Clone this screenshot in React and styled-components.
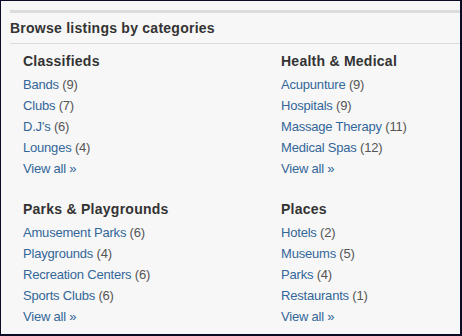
import styled, { createGlobalStyle } from "styled-components"

const Global = createGlobalStyle`
html, body {
  margin: 0;
  padding: 0;
  background: #f7f7f7;
}
`;

const Frame = styled.div`
box-sizing: border-box;
width: 462px;
height: 336px;
border: 1px solid #0b0b24;
border-right-width: 2px;
border-bottom-width: 2px;
background: #f7f7f7;
padding: 9px 0 0 9px;
font-family: "Liberation Sans", Arial, sans-serif;
overflow: hidden;
`;

const Panel = styled.div`
border-top: 3px solid #dcdcdc;
`;

const Header = styled.div`
height: 30px;
line-height: 30px;
border-bottom: 1px solid #dcdcdc;
font-size: 14px;
font-weight: bold;
color: #333;
letter-spacing: 0.25px;
`;

const Grid = styled.div`
display: grid;
grid-template-columns: 258px 1fr;
row-gap: 20px;
padding: 7px 0 0 13px;
`;

const Group = styled.div`
display: flex;
flex-direction: column;
`;

const GroupTitle = styled.div`
font-size: 14px;
font-weight: bold;
line-height: 20px;
color: #333;
letter-spacing: 0.25px;
margin-bottom: 3px;
`;

const Item = styled.div`
font-size: 13px;
line-height: 21px;
color: #555;
letter-spacing: -0.2px;
`;

const Link = styled.a`
color: #336699;
text-decoration: none;
cursor: pointer;
`;

const groups = [
  { title: "Classifieds", items: [["Bands", 9], ["Clubs", 7], ["D.J's", 6], ["Lounges", 4]] },
  { title: "Health & Medical", items: [["Acupunture", 9], ["Hospitals", 9], ["Massage Therapy", 11], ["Medical Spas", 12]] },
  { title: "Parks & Playgrounds", items: [["Amusement Parks", 6], ["Playgrounds", 4], ["Recreation Centers", 6], ["Sports Clubs", 6]] },
  { title: "Places", items: [["Hotels", 2], ["Museums", 5], ["Parks", 4], ["Restaurants", 1]] },
]

const App = () => {
  return (
    <>
      <Global />
      <Frame>
        <Panel>
          <Header>Browse listings by categories</Header>
          <Grid>
            {groups.map(g => (
              <Group key={g.title}>
                <GroupTitle>{g.title}</GroupTitle>
                {g.items.map(([name, count]) => (
                  <Item key={name}>
                    <Link>{name}</Link> ({count})
                  </Item>
                ))}
                <Item>
                  <Link>View all »</Link>
                </Item>
              </Group>
            ))}
          </Grid>
        </Panel>
      </Frame>
    </>
  )
}

export default App
